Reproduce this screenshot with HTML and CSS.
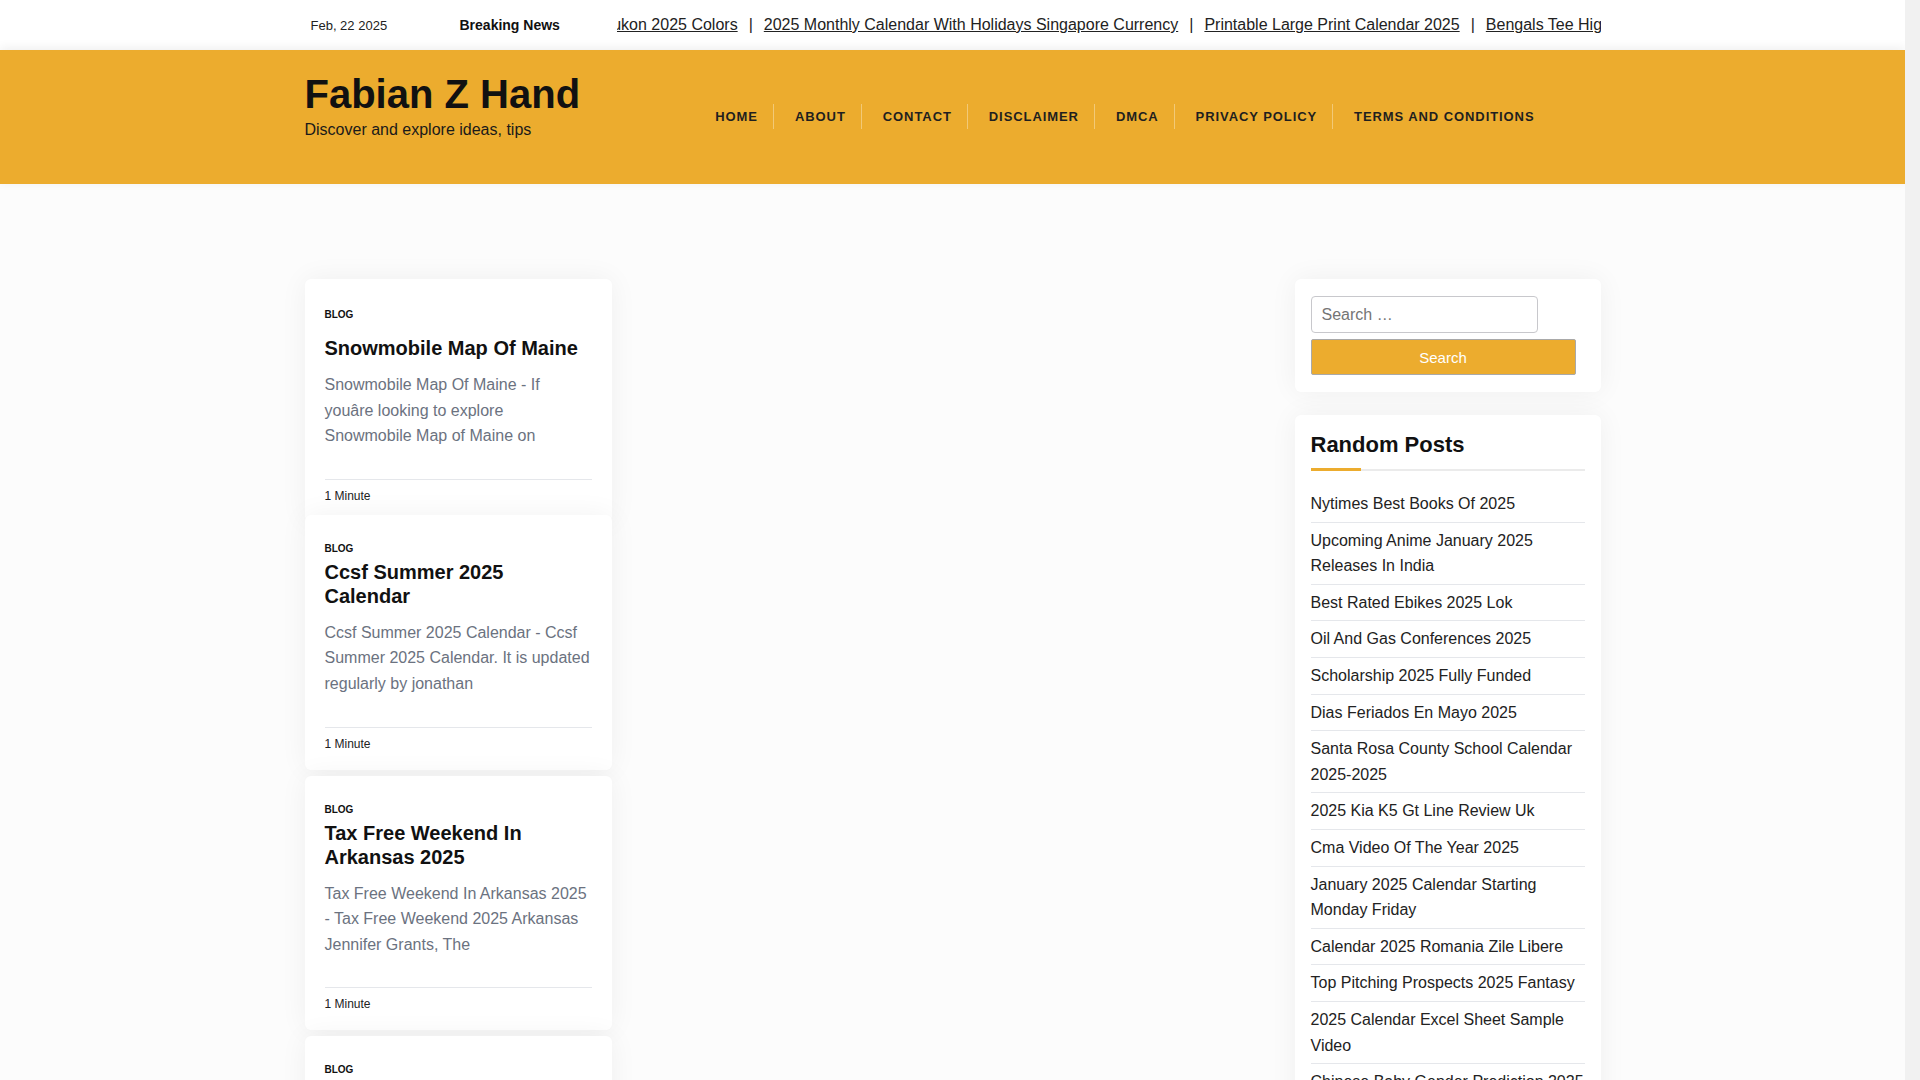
FILE: index.html
```html
<!DOCTYPE html>
<html lang="en">
<head>
<meta charset="utf-8">
<title>Fabian Z Hand</title>
<link rel="stylesheet" href="styles.css">
</head>
<body>
<div class="topbar">
  <div class="container topbar-inner">
    <span class="date">Feb, 22 2025</span>
    <span class="breaking">Breaking News</span>
    <div class="ticker">
      <div class="ticker-track">
        <a href="#">Gmc Yukon 2025 Colors</a><span class="sep">|</span><a href="#">2025 Monthly Calendar With Holidays Singapore Currency</a><span class="sep">|</span><a href="#">Printable Large Print Calendar 2025</a><span class="sep">|</span><a href="#">Bengals Tee Higgins Contract 2025</a><span class="sep">|</span><a href="#">Nytimes Best Books Of 2025</a>
      </div>
    </div>
  </div>
</div>

<header class="masthead">
  <div class="container masthead-inner">
    <div class="branding">
      <h1 class="site-title"><a href="#">Fabian Z Hand</a></h1>
      <p class="tagline">Discover and explore ideas, tips</p>
    </div>
    <nav class="main-nav">
      <ul>
        <li><a href="#">Home</a></li>
        <li><a href="#">About</a></li>
        <li><a href="#">Contact</a></li>
        <li><a href="#">Disclaimer</a></li>
        <li><a href="#">DMCA</a></li>
        <li><a href="#">Privacy Policy</a></li>
        <li><a href="#">Terms and Conditions</a></li>
      </ul>
    </nav>
  </div>
</header>

<main class="container main-grid">
  <div class="post-list">
    <article class="post-card post-card--lead">
      <div class="post-cat">BLOG</div>
      <h2 class="post-title">Snowmobile Map Of Maine</h2>
      <p class="post-excerpt">Snowmobile Map Of Maine - If youâre looking to explore Snowmobile Map of Maine on</p>
      <div class="post-meta">1 Minute</div>
    </article>
    <article class="post-card">
      <div class="post-cat">BLOG</div>
      <h2 class="post-title">Ccsf Summer 2025 Calendar</h2>
      <p class="post-excerpt">Ccsf Summer 2025 Calendar - Ccsf Summer 2025 Calendar. It is updated regularly by jonathan</p>
      <div class="post-meta">1 Minute</div>
    </article>
    <article class="post-card">
      <div class="post-cat">BLOG</div>
      <h2 class="post-title">Tax Free Weekend In Arkansas 2025</h2>
      <p class="post-excerpt">Tax Free Weekend In Arkansas 2025 - Tax Free Weekend 2025 Arkansas Jennifer Grants, The</p>
      <div class="post-meta">1 Minute</div>
    </article>
    <article class="post-card">
      <div class="post-cat">BLOG</div>
      <h2 class="post-title">Bengals Tee Higgins Contract 2025</h2>
      <p class="post-excerpt">Bengals Tee Higgins Contract 2025 - Bengals Tee Higgins Contract 2025. It is updated regularly by jonathan</p>
      <div class="post-meta">1 Minute</div>
    </article>
  </div>

  <div class="gutter"></div>

  <aside class="sidebar">
    <section class="widget widget-search">
      <form class="search-form" action="#">
        <input class="search-field" type="search" placeholder="Search …">
        <button class="search-submit" type="button">Search</button>
      </form>
    </section>
    <section class="widget widget-random">
      <h2 class="widget-title">Random Posts</h2>
      <ul class="random-list">
        <li><a href="#">Nytimes Best Books Of 2025</a></li>
        <li><a href="#">Upcoming Anime January 2025 Releases In India</a></li>
        <li><a href="#">Best Rated Ebikes 2025 Lok</a></li>
        <li><a href="#">Oil And Gas Conferences 2025</a></li>
        <li><a href="#">Scholarship 2025 Fully Funded</a></li>
        <li><a href="#">Dias Feriados En Mayo 2025</a></li>
        <li><a href="#">Santa Rosa County School Calendar 2025-2025</a></li>
        <li><a href="#">2025 Kia K5 Gt Line Review Uk</a></li>
        <li><a href="#">Cma Video Of The Year 2025</a></li>
        <li><a href="#">January 2025 Calendar Starting Monday Friday</a></li>
        <li><a href="#">Calendar 2025 Romania Zile Libere</a></li>
        <li><a href="#">Top Pitching Prospects 2025 Fantasy</a></li>
        <li><a href="#">2025 Calendar Excel Sheet Sample Video</a></li>
        <li><a href="#">Chinese Baby Gender Prediction 2025</a></li>
        <li><a href="#">Printable Large Print Calendar 2025</a></li>
      </ul>
    </section>
  </aside>
</main>
</body>
</html>
```

FILE: styles.css
```css
* { box-sizing: border-box; }

body {
  margin: 0;
  background: #fcfcfc;
  font-family: "Liberation Sans", Arial, sans-serif;
  color: #222;
  /* strip standing in for the window scrollbar seen in the reference */
  border-right: 15px solid #f1f1f1;
}

.container {
  width: 1296px;
  margin: 0 auto;
}

/* top bar */
.topbar {
  background: #fff;
  height: 50px;
}
.topbar-inner {
  display: flex;
  align-items: center;
  height: 50px;
}
.date {
  flex: none;
  width: 155px;
  padding-left: 6px;
  font-size: 13px;
  color: #222;
}
.breaking {
  flex: none;
  width: 157px;
  font-size: 14px;
  font-weight: bold;
  color: #111;
}
.ticker {
  flex: 1;
  overflow: hidden;
  white-space: nowrap;
}
.ticker-track {
  display: inline-block;
  margin-left: -52px;
  font-size: 16px;
}
.ticker-track a {
  color: #222;
  text-decoration: underline;
}
.sep {
  padding: 0 11px;
  color: #222;
}

/* header */
.masthead {
  background: #ecac2e;
  padding: 20px 0 42px;
  box-shadow: 0 -2px 10px rgba(0, 0, 0, 0.07);
  position: relative;
}
.masthead-inner {
  display: flex;
  align-items: flex-start;
}
.site-title {
  margin: 0;
  font-size: 40px;
  line-height: 48px;
  font-weight: bold;
}
.site-title a {
  color: #111;
  text-decoration: none;
}
.tagline {
  margin: 0;
  font-size: 16px;
  line-height: 24px;
  color: #1a1a1a;
}
.main-nav {
  margin-left: auto;
  margin-top: 34px;
  padding-right: 51px;
}
.main-nav ul {
  list-style: none;
  margin: 0;
  padding: 0;
  display: flex;
}
.main-nav li {
  padding: 0 15px 0 21px;
  line-height: 24px;
  border-left: 1px solid rgba(255, 255, 255, 0.35);
}
.main-nav li:first-child {
  border-left: 0;
}
.main-nav a {
  font-size: 13px;
  font-weight: bold;
  letter-spacing: 0.92px;
  text-transform: uppercase;
  color: #1f1f1f;
  text-decoration: none;
}

/* main */
.main-grid {
  display: grid;
  grid-template-columns: 307px 1fr 306px;
  align-items: start;
  padding-top: 95px;
  padding-bottom: 40px;
}

.post-list {
  display: flex;
  flex-direction: column;
  gap: 6px;
}
.post-card {
  background: #fff;
  border-radius: 6px;
  box-shadow: 0 0 28px rgba(0, 0, 0, 0.055);
  padding: 27px 20px 17px;
}
.post-card--lead {
  padding-top: 29px;
  margin-bottom: -13px;
}
.post-cat {
  font-size: 10px;
  line-height: 14px;
  font-weight: bold;
  color: #111;
}
.post-title {
  margin: 4px 0 0;
  font-size: 20px;
  line-height: 24px;
  font-weight: bold;
  color: #111;
}
.post-card--lead .post-title {
  margin-top: 14px;
}
.post-excerpt {
  margin: 12px 0 0;
  font-size: 16px;
  line-height: 1.6;
  color: #6b7280;
}
.post-meta {
  margin-top: 30px;
  border-top: 1px solid #e5e7eb;
  padding-top: 7px;
  font-size: 12px;
  line-height: 18px;
  color: #222;
}

/* sidebar */
.sidebar {
  display: flex;
  flex-direction: column;
  gap: 23px;
}
.widget {
  background: #fff;
  border-radius: 6px;
  box-shadow: 0 0 28px rgba(0, 0, 0, 0.055);
}
.widget-search {
  padding: 17px 16px;
}
.search-form {
  display: flex;
  flex-direction: column;
  align-items: flex-start;
  gap: 6px;
}
.search-field {
  width: 227px;
  height: 37px;
  border: 1px solid #c8c8cc;
  border-radius: 4px;
  padding: 0 10px;
  font-family: "Liberation Sans", Arial, sans-serif;
  font-size: 16px;
  color: #222;
  background: #fff;
}
.search-field::placeholder {
  color: #757575;
}
.search-submit {
  width: 265px;
  height: 36px;
  background: #ecac2e;
  border: 1px solid #a9a9a9;
  border-radius: 2px;
  font-family: "Liberation Sans", Arial, sans-serif;
  font-size: 15px;
  color: #fff;
}

.widget-random {
  padding: 16px 16px 20px;
}
.widget-title {
  position: relative;
  margin: 0;
  font-size: 22px;
  line-height: 28px;
  font-weight: bold;
  color: #111;
  padding-bottom: 10px;
  border-bottom: 2px solid #ebebeb;
}
.widget-title::after {
  content: "";
  position: absolute;
  left: 0;
  bottom: -2px;
  width: 50px;
  height: 3px;
  background: #ecac2e;
}
.random-list {
  list-style: none;
  margin: 15px 0 0;
  padding: 0;
}
.random-list li {
  padding: 5px 0;
  border-bottom: 1px solid #e5e7eb;
  font-size: 16px;
  line-height: 1.6;
}
.random-list a {
  color: #222;
  text-decoration: none;
}
```
